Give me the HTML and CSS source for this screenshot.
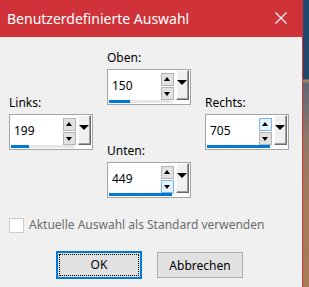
FILE: index.html
```html
<!DOCTYPE html>
<html lang="de">

<head>
  <meta charset="UTF-8">
  <title>Benutzerdefinierte Auswahl</title>
  <link rel="stylesheet" href="styles.css">
</head>

<body>
  <div class="screen">
    <div class="dialog">
      <div class="titlebar">
        <span class="title">Benutzerdefinierte Auswahl</span>
        <svg class="close" width="12" height="12" viewBox="0 0 12 12">
          <path d="M0.5 0.5 L11.5 11.5 M11.5 0.5 L0.5 11.5" stroke="#fff" stroke-width="1.1" fill="none"/>
        </svg>
      </div>

      <div class="content">
        <div class="fields">
          <div class="col side">
            <div class="field">
              <div class="label">Links:</div>
              <div class="spin">
                <div class="spin-row">
                  <div class="num">199</div>
                  <div class="steppers">
                    <div class="step up"></div>
                    <div class="step down"></div>
                  </div>
                  <div class="drop"></div>
                </div>
                <div class="track"><div class="bar" style="width: 18px"></div></div>
              </div>
            </div>
          </div>

          <div class="col middle">
            <div class="field">
              <div class="label">Oben:</div>
              <div class="spin">
                <div class="spin-row">
                  <div class="num">150</div>
                  <div class="steppers">
                    <div class="step up"></div>
                    <div class="step down"></div>
                  </div>
                  <div class="drop"></div>
                </div>
                <div class="track"><div class="bar" style="width: 21px"></div></div>
              </div>
            </div>
            <div class="field">
              <div class="label">Unten:</div>
              <div class="spin">
                <div class="spin-row">
                  <div class="num">449</div>
                  <div class="steppers">
                    <div class="step up"></div>
                    <div class="step down hot"></div>
                  </div>
                  <div class="drop"></div>
                </div>
                <div class="track"><div class="bar" style="width: 63px"></div></div>
              </div>
            </div>
          </div>

          <div class="col side">
            <div class="field">
              <div class="label">Rechts:</div>
              <div class="spin">
                <div class="spin-row">
                  <div class="num">705</div>
                  <div class="steppers">
                    <div class="step up hot"></div>
                    <div class="step down"></div>
                  </div>
                  <div class="drop"></div>
                </div>
                <div class="track"><div class="bar" style="width: 63px"></div></div>
              </div>
            </div>
          </div>
        </div>

        <label class="check">
          <span class="box"></span>
          <span>Aktuelle Auswahl als Standard verwenden</span>
        </label>

        <div class="buttons">
          <button class="btn default"><span>OK</span></button>
          <button class="btn">Abbrechen</button>
        </div>
      </div>
    </div>
    <div class="desktop"></div>
  </div>
</body>

</html>
```

FILE: styles.css
```css
body {
  margin: 0;
  padding: 0;
  font-family: "Noto Sans", "Open Sans", sans-serif;
  font-size: 12px;
  color: #000;
}

.screen {
  display: flex;
  width: 309px;
  height: 287px;
  overflow: hidden;
}

.dialog {
  width: 302px;
  flex: none;
  background-color: #f0f0f0;
  border-right: 1px solid #cf3339;
  display: flex;
  flex-direction: column;
}

.desktop {
  flex: 1;
  background: linear-gradient(to bottom, #1d4a70 0, #22496a 79px, #b48a5c 80px, #5d6a78 84px, #8d7a68 140px, #a27c5c 200px, #a67b58 287px);
}

.titlebar {
  height: 37px;
  background-color: #cf3339;
  color: #fff;
  display: flex;
  align-items: center;
  padding: 0 15px 0 7px;
  flex: none;
}

.title {
  flex: 1;
  font-size: 14px;
  padding-bottom: 1px;
}

.close {
  display: block;
  margin-top: -1px;
}

.content {
  flex: 1;
}

.fields {
  display: grid;
  grid-template-columns: 84px 84px 84px;
  column-gap: 14px;
  padding-left: 9px;
}

.side {
  padding-top: 58px;
}

.middle {
  padding-top: 13px;
  display: flex;
  flex-direction: column;
  gap: 38px;
}

.label {
  line-height: 16px;
  height: 16px;
  margin-bottom: 3px;
}

.spin {
  height: 34px;
  border: 1px solid #a5a5a5;
  background-color: #fff;
  display: flex;
  flex-direction: column;
}

.spin-row {
  display: flex;
  height: 30px;
}

.num {
  width: 49px;
  padding-left: 4px;
  line-height: 32px;
  font-size: 12px;
}

.steppers {
  display: flex;
  flex-direction: column;
  gap: 1px;
  padding-top: 3px;
}

.step {
  width: 11px;
  height: 11px;
  background-color: #e1e1e1;
  border: 1px solid #b4b4b4;
  position: relative;
}

.step.hot {
  background-color: #e5f1fb;
  border-color: #7eb4ea;
}

.step::after {
  content: "";
  position: absolute;
  left: 2px;
  width: 0;
  height: 0;
  border-left: 3.5px solid transparent;
  border-right: 3.5px solid transparent;
}

.step.up::after {
  top: 3px;
  border-bottom: 4px solid #000;
}

.step.down::after {
  top: 4px;
  border-top: 4px solid #000;
}

.drop {
  width: 11px;
  height: 28px;
  margin-left: 2px;
  background-color: #f0f0f0;
  border-top: 1px solid #fff;
  border-left: 1px solid #fff;
  border-right: 1px solid #6a6a6a;
  border-bottom: 1px solid #6a6a6a;
  box-shadow: inset -1px -1px 0 #a0a0a0;
  position: relative;
}

.drop::after {
  content: "";
  position: absolute;
  left: 0;
  top: 9px;
  border-left: 5px solid transparent;
  border-right: 5px solid transparent;
  border-top: 5px solid #000;
}

.track {
  width: 63px;
  height: 3px;
  margin-left: 1px;
  background-color: #e6e6e6;
}

.bar {
  height: 3px;
  background-color: #0078d7;
}

.check {
  display: flex;
  align-items: center;
  gap: 5px;
  margin: 19px 0 0 9px;
  color: #6d6d6d;
  line-height: 16px;
}

.box {
  width: 13px;
  height: 13px;
  border: 1px solid #cccccc;
  background-color: #fff;
}

.buttons {
  display: flex;
  align-items: center;
  gap: 15px;
  padding-left: 56px;
  margin-top: 18px;
}

.btn {
  width: 86px;
  height: 26px;
  font-family: inherit;
  font-size: 12px;
  color: #000;
  background-color: #e1e1e1;
  border: 1px solid #adadad;
  padding: 0;
  margin: 0;
}

.btn.default {
  height: 28px;
  border: 2px solid #0078d7;
  padding: 1px;
}

.btn.default span {
  display: block;
  height: 100%;
  line-height: 20px;
  border: 1px dotted #000;
  box-sizing: border-box;
}
```
